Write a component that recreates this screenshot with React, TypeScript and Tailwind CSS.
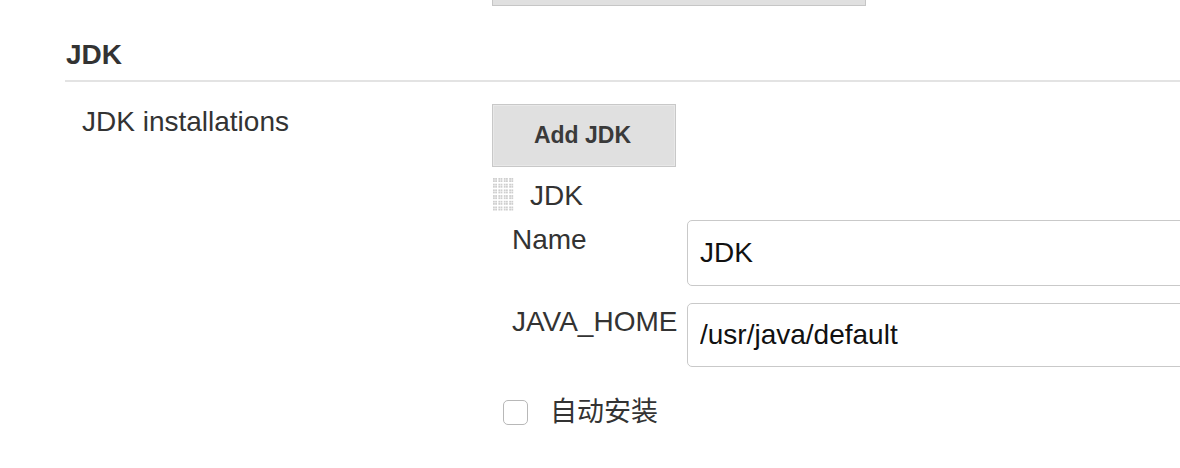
import React from "react";

const FONT = "font-['Liberation_Sans','Noto_Sans_CJK_SC',sans-serif]";

function DragHandle() {
  const cells = [];
  for (let r = 0; r < 6; r++) {
    for (let c = 0; c < 4; c++) {
      cells.push(
        <g key={`${r}-${c}`} fill="#cfcfcf">
          <rect x={c * 5.4} y={r * 5.7} width="1.8" height="1.8" />
          <rect x={c * 5.4 + 2.2} y={r * 5.7} width="1.8" height="1.8" />
          <rect x={c * 5.4} y={r * 5.7 + 2.2} width="1.8" height="1.8" />
          <rect x={c * 5.4 + 2.2} y={r * 5.7 + 2.2} width="1.8" height="1.8" />
        </g>
      );
    }
  }
  return (
    <svg width="21" height="34" viewBox="0 0 21 34" className="ml-px shrink-0">
      {cells}
    </svg>
  );
}

function Field({
  label,
  value,
  height,
  labelPad,
}: {
  label: string;
  value: string;
  height: string;
  labelPad: string;
}) {
  return (
    <div className="flex items-start">
      <label className={`w-[195px] shrink-0 pl-[20px] text-[28px] leading-[32px] text-[#333] ${labelPad}`}>
        {label}
      </label>
      <input
        readOnly
        value={value}
        className={`w-[520px] shrink-0 rounded-[5px] border border-[#c9c9c9] bg-white pl-[12px] text-[28px] text-[#111] outline-none ${height} ${FONT}`}
      />
    </div>
  );
}

export default function App() {
  return (
    <div className={`w-[1180px] h-[468px] overflow-hidden bg-white text-[#333] ${FONT}`}>
      {/* bottom edge of the previous section's button */}
      <div className="ml-[492px] h-[6px] w-[374px] border-x border-b border-[#c6c6c6] bg-[#e0e0e0]" />

      <div className="ml-[65px] mt-[33px]">
        <h2 className="border-b-2 border-[#e3e3e3] pb-[9px] pl-px text-[28px] font-bold leading-[32px] text-[#333]">
          JDK
        </h2>

        <div className="mt-[22px] flex">
          <div className="w-[427px] shrink-0 pl-[17px] pt-[2px] text-[28px] leading-[32px]">
            JDK installations
          </div>

          <div className="flex flex-col">
            <button className="h-[63px] w-[184px] border border-[#c8c8c8] bg-[#e0e0e0] pr-[3px] text-[23px] font-bold text-[#3a3a3a] shadow-[inset_0_0_0_1px_#e8e8e8]">
              Add JDK
            </button>

            <div className="mt-[11px] flex items-start gap-[16px]">
              <DragHandle />
              <span className="mt-[2px] text-[28px] leading-[32px]">JDK</span>
            </div>

            <div className="mt-[8px] flex flex-col gap-[17px]">
              <Field label="Name" value="JDK" height="h-[66px]" labelPad="pt-[4px]" />
              <Field label="JAVA_HOME" value="/usr/java/default" height="h-[64px]" labelPad="pt-[3px]" />
            </div>

            <div className="mt-[29px] flex h-[32px] items-center">
              <span className="ml-[11px] h-[25px] w-[25px] shrink-0 rounded-[5px] border-[1.5px] border-[#b8b8b8] bg-white" />
              <span className="ml-[22px] text-[27px] leading-[32px] text-[#333]">自动安装</span>
            </div>
          </div>
        </div>
      </div>
    </div>
  );
}
